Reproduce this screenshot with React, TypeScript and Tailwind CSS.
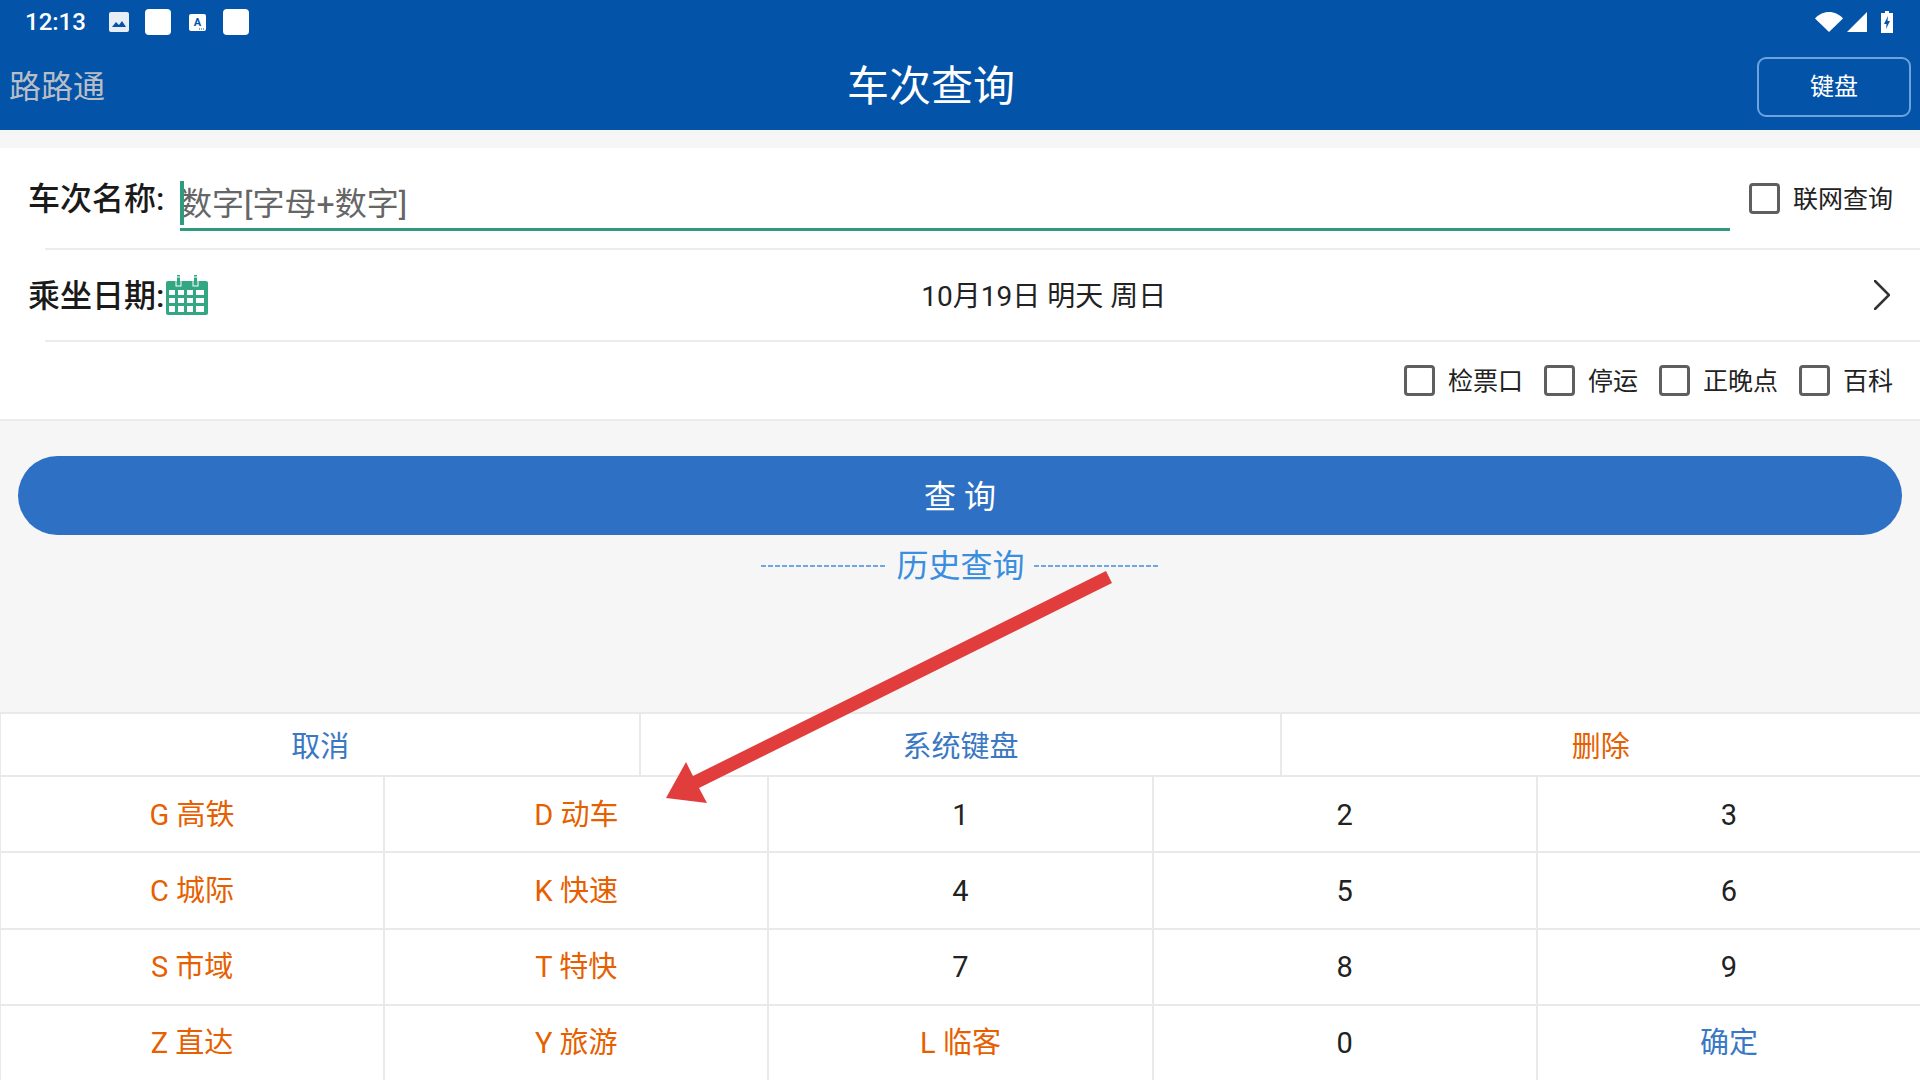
import React from "react";

const cjk = "font-['Roboto','Noto_Sans_CJK_SC',sans-serif]";

const Box: React.FC<{ label: string }> = ({ label }) => (
  <div className="flex items-center">
    <div className="w-[31px] h-[31px] border-[3px] border-[#5f5f5f] rounded-[4px]" />
    <span className="ml-[13px] pt-0.5 text-[25px] text-[#222222] leading-none">{label}</span>
  </div>
);

const Key: React.FC<{ text: string; color?: string; top?: boolean }> = ({ text, color, top }) => (
  <div
    className={`flex items-center justify-center text-[29px] leading-none border-t-2 border-l-2 border-[#e9e9e9] ${top ? "pt-[5px]" : "pt-0.5"} ${color ?? "text-[#222222]"}`}
  >
    {text}
  </div>
);

const orange = "text-[#e65f00]";
const blue = "text-[#3a78c4]";

const App: React.FC = () => {
  return (
    <div className={`relative w-[1920px] h-[1080px] overflow-hidden bg-[#f6f6f6] ${cjk}`}>
      {/* header */}
      <div className="h-[130px] bg-[#0353a8] flex flex-col">
        <div className="h-[44px] flex items-center pl-[25px] pr-[27px]">
          <span className="text-[24px] font-medium text-white leading-none">12:13</span>
          <svg className="ml-[23px]" width="20" height="20" viewBox="0 0 20 20">
            <rect width="20" height="20" rx="2" fill="#e8eef6" />
            <path d="M3 15l4-5 3 3 3-4 4 6z" fill="#0353a8" />
          </svg>
          <div className="ml-[16px] w-[26px] h-[26px] bg-white rounded-[4px]" />
          <svg className="ml-[18px]" width="17" height="17" viewBox="0 0 17 17">
            <rect width="17" height="17" rx="2" fill="#ffffff" />
            <text x="8.5" y="12" textAnchor="middle" fontSize="11" fontWeight="700" fill="#0353a8">
              A
            </text>
            <path d="M10 15h5" stroke="#0353a8" strokeWidth="1.2" strokeDasharray="1 1" />
          </svg>
          <div className="ml-[17px] w-[26px] h-[26px] bg-white rounded-[4px]" />
          <div className="ml-auto flex items-center">
            <svg width="28" height="20" viewBox="0 0 28 20">
              <path d="M0 6.5C3.5 2.5 8.5 0 14 0s10.500 2.500 14 6.500L14 20z" fill="#ffffff" />
            </svg>
            <svg className="ml-[4px]" width="20" height="20" viewBox="0 0 20 20">
              <path d="M20 0v20H0z" fill="#ffffff" />
            </svg>
            <svg className="ml-[14px]" width="12" height="22" viewBox="0 0 12 22">
              <path d="M4 0h4v2h4v20H0V2h4z" fill="#ffffff" />
              <path d="M7 5L3 13h2.500L5 18l4-8H6.500z" fill="#0353a8" />
            </svg>
          </div>
        </div>
        <div className="flex-1 flex items-center pr-[9px]">
          <div className="w-[105px] pl-[9px] text-[32px] text-[#b9bec6] leading-none whitespace-nowrap">路路通</div>
          <div className="flex-1 text-center text-[42px] text-white leading-none">车次查询</div>
          <div className="w-[154px] h-[60px] border-2 border-[#6ca3dc] rounded-[9px] flex items-center justify-center text-[24px] text-white">
            键盘
          </div>
        </div>
      </div>

      {/* form card */}
      <div className="mt-[18px] bg-white border-b-2 border-[#ececec]">
        <div className="h-[100px] flex items-start pl-[28px] pr-[27px]">
          <span className="mt-[35px] w-[152px] text-[32px] font-medium text-[#1a1a1a] leading-none whitespace-nowrap">
            车次名称:
          </span>
          <div className="mt-[33px] w-[1550px] h-[50px] border-b-[3px] border-[#2f9a7d] relative flex items-center pb-0.5">
            <div className="absolute left-0 top-0 w-[4px] h-[44px] bg-[#2f9a7d]" />
            <span className="text-[32px] text-[#666666] leading-none">数字[字母+数字]</span>
          </div>
          <div className="ml-auto mt-[35px]">
            <Box label="联网查询" />
          </div>
        </div>
        <div className="ml-[45px] h-0.5 bg-[#ececec]" />
        <div className="h-[90px] flex items-center pl-[28px] pr-[30px]">
          <span className="pt-0.5 text-[32px] font-medium text-[#1a1a1a] leading-none whitespace-nowrap">乘坐日期:</span>
          <svg width="42" height="40" viewBox="0 0 42 40" className="ml-[2px]">
            <rect x="0" y="6" width="42" height="34" rx="2" fill="#33a682" />
            <rect x="11" y="0" width="3" height="10" fill="#33a682" />
            <rect x="28" y="0" width="3" height="10" fill="#33a682" />
            <rect x="10" y="2" width="5" height="9" fill="none" stroke="#ffffff" strokeWidth="1" />
            <rect x="27" y="2" width="5" height="9" fill="none" stroke="#ffffff" strokeWidth="1" />
            <g fill="#ffffff">
              <rect x="3" y="15" width="6" height="5" />
              <rect x="12" y="15" width="6" height="5" />
              <rect x="21" y="15" width="6" height="5" />
              <rect x="30" y="15" width="8" height="5" />
              <rect x="3" y="23" width="6" height="5" />
              <rect x="12" y="23" width="6" height="5" />
              <rect x="21" y="23" width="6" height="5" />
              <rect x="30" y="23" width="8" height="5" />
              <rect x="3" y="31" width="6" height="6" />
              <rect x="12" y="31" width="6" height="6" />
              <rect x="21" y="31" width="6" height="6" />
              <rect x="30" y="31" width="8" height="6" />
            </g>
          </svg>
          <div className="flex-1 pl-[5px] pt-[3px] text-center text-[28px] text-[#222222] leading-none">10月19日 明天 周日</div>
          <svg width="16" height="30" viewBox="0 0 16 30">
            <path d="M1 1l14 14L1 29" fill="none" stroke="#333333" strokeWidth="2.500" strokeLinecap="round" />
          </svg>
        </div>
        <div className="ml-[45px] h-0.5 bg-[#ececec]" />
        <div className="h-[77px] flex items-center justify-end gap-[21px] pr-[27px]">
          <Box label="检票口" />
          <Box label="停运" />
          <Box label="正晚点" />
          <Box label="百科" />
        </div>
      </div>

      {/* search */}
      <div className="mt-[35px] mx-[18px] h-[79px] rounded-full bg-[#2d70c4] flex items-center justify-center pt-0.5 text-[32px] text-white leading-none">
        查 询
      </div>
      <div className="mt-[11px] flex items-center justify-center gap-[9px] pl-px">
        <div className="w-[126px] h-0.5 bg-[repeating-linear-gradient(90deg,#6fa6e4_0_5px,transparent_5px_7px)]" />
        <span className="text-[32px] text-[#3a8ee0] leading-[40px]">历史查询</span>
        <div className="w-[126px] h-0.5 bg-[repeating-linear-gradient(90deg,#6fa6e4_0_5px,transparent_5px_7px)]" />
      </div>

      {/* keyboard */}
      <div className="absolute left-[-1px] right-0 bottom-0 bg-white">
        <div className="grid grid-cols-3 h-[63px]">
          <Key text="取消" color={blue} top />
          <Key text="系统键盘" color={blue} top />
          <Key text="删除" color={orange} top />
        </div>
        <div className="grid grid-cols-5 grid-rows-4 h-[305px]">
          <Key text="G 高铁" color={orange} />
          <Key text="D 动车" color={orange} />
          <Key text="1" />
          <Key text="2" />
          <Key text="3" />
          <Key text="C 城际" color={orange} />
          <Key text="K 快速" color={orange} />
          <Key text="4" />
          <Key text="5" />
          <Key text="6" />
          <Key text="S 市域" color={orange} />
          <Key text="T 特快" color={orange} />
          <Key text="7" />
          <Key text="8" />
          <Key text="9" />
          <Key text="Z 直达" color={orange} />
          <Key text="Y 旅游" color={orange} />
          <Key text="L 临客" color={orange} />
          <Key text="0" />
          <Key text="确定" color={blue} />
        </div>
      </div>

      {/* red annotation arrow */}
      <svg className="absolute left-0 top-0 pointer-events-none" width="1920" height="1080" viewBox="0 0 1920 1080">
        <path d="M1106 571L1112 583L699 788L707 803L666 798L686 762L693 776Z" fill="#e23d3d" />
      </svg>
    </div>
  );
};

export default App;
